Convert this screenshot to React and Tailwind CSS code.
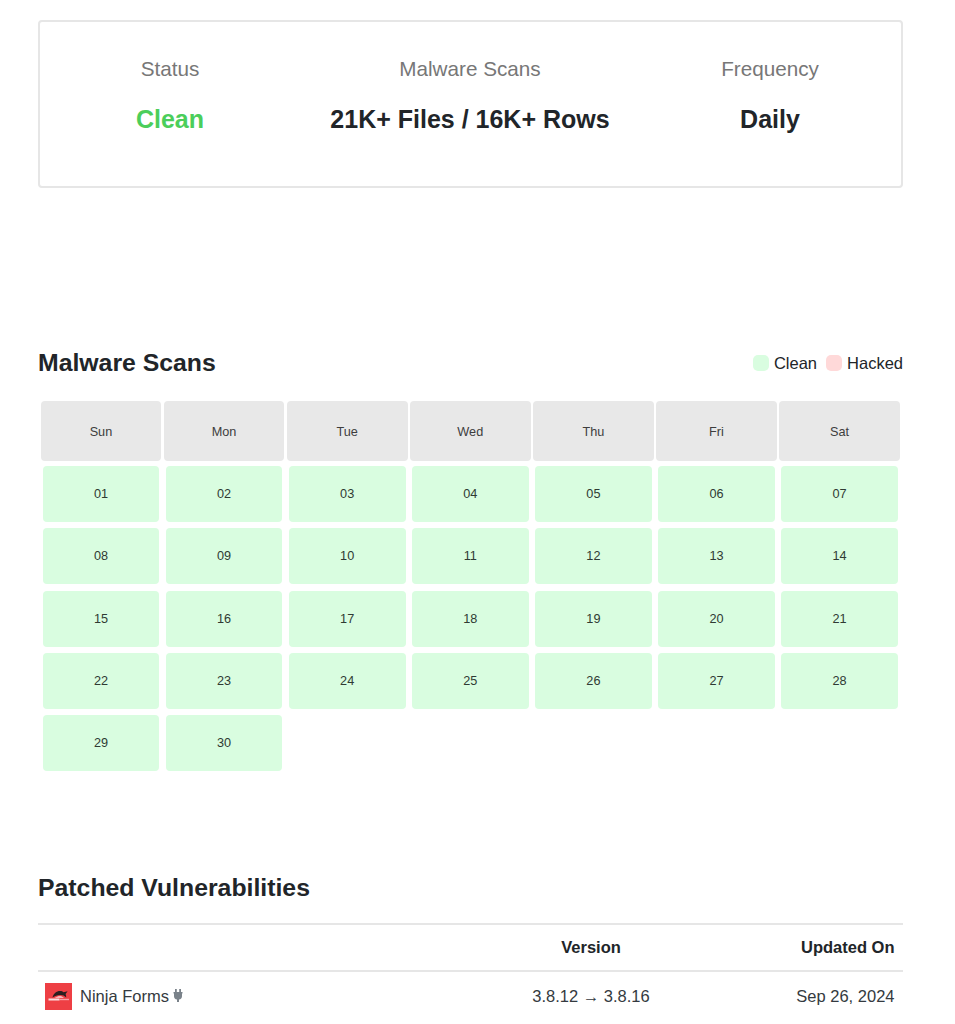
const header = ["Sun", "Mon", "Tue", "Wed", "Thu", "Fri", "Sat"];
const days = Array.from({ length: 30 }, (_, i) => String(i + 1).padStart(2, "0"));

function NinjaLogo() {
  return (
    <svg viewBox="0 0 27 27" className="mt-[2px] h-[27px] w-[27px] shrink-0" aria-hidden="true">
      <rect width="27" height="27" fill="#ee3f44" />
      <path d="M7.500 14.500C8.500 10.500 11.500 8 15 8c1.500 0 2.700.5 3.600 1.300l4-1.100-2 2.800c.4 1 .6 2 .6 3.500-1.500-1.700-3.400-2.500-6-2.500-3 0-5.300 1.100-7.700 2.500z" fill="#2b1f20" />
      <path d="M9.500 14.800c1.800-1 3.500-1.600 5.400-1.600 1.600 0 3 .5 4.100 1.600z" fill="#f9dfe0" />
      <rect x="3.500" y="15.500" width="11" height="2" fill="#f9dfe0" />
      <rect x="14.500" y="15.800" width="9.500" height="1.400" fill="#f6a5a8" />
    </svg>
  );
}

function Plug() {
  return (
    <svg viewBox="0 0 10 13" className="ml-[4px] h-[13px] w-[10px]" aria-hidden="true">
      <path d="M2 0h1.800v3h2.400V0H8v3h1.500v1.500H9v2.800C9 9 7.800 10.300 6 10.600V13H4v-2.400C2.200 10.300 1 9 1 7.300V4.500H.5V3H2z" fill="#7a828a" />
    </svg>
  );
}

export default function App() {
  return (
    <div className="ml-[38px] h-[1024px] w-[865px] overflow-hidden font-['Liberation_Sans',Arial,sans-serif] text-[#212529]">
      <section className="mt-[20px] grid h-[168px] grid-cols-[1fr_340px_1fr] rounded-[4px] border-2 border-[#e6e6e6] pr-[1px] pt-[35px] text-center">
        <div>
          <div className="text-[20.700px] leading-[24px] text-[#777777]">Status</div>
          <div className="mt-[23px] text-[25px] font-bold leading-[30px] text-[#4bce5b]">Clean</div>
        </div>
        <div>
          <div className="text-[20.700px] leading-[24px] text-[#777777]">Malware Scans</div>
          <div className="mt-[23px] text-[25px] font-bold leading-[30px]">21K+ Files / 16K+ Rows</div>
        </div>
        <div>
          <div className="text-[20.700px] leading-[24px] text-[#777777]">Frequency</div>
          <div className="mt-[23px] text-[25px] font-bold leading-[30px]">Daily</div>
        </div>
      </section>

      <div className="mt-[160px] flex h-[30px] items-center justify-between">
        <h2 className="text-[24.800px] font-bold leading-[30px]">Malware Scans</h2>
        <div className="flex items-center text-[16.500px] leading-[20px]">
          <span className="h-[16px] w-[16px] rounded-[5px] bg-[#d9fde0]" />
          <span className="ml-[5px]">Clean</span>
          <span className="ml-[9px] h-[16px] w-[16px] rounded-[5px] bg-[#ffd9d9]" />
          <span className="ml-[5px]">Hacked</span>
        </div>
      </div>

      <div className="ml-[2.600px] mr-[3px] mt-[23px] grid grid-cols-7 gap-x-[2.400px] gap-y-[2.200px] text-[12.700px] leading-[16px]">
        {header.map((d) => (
          <div key={d} className="flex h-[60px] items-center justify-center rounded-[4px] bg-[#e8e8e8] pt-[1px] text-[#3d3d3d]">
            {d}
          </div>
        ))}
        {days.map((d) => (
          <div key={d} className="flex h-[60px] px-[2px] pb-[1px] pt-[3px]">
            <div className="flex flex-1 items-center justify-center rounded-[4px] bg-[#d9fde0] text-[#2f3a33]">{d}</div>
          </div>
        ))}
      </div>

      <h2 className="mt-[101px] text-[24.800px] font-bold leading-[30px]">Patched Vulnerabilities</h2>

      <div className="mt-[20px] grid h-[49px] grid-cols-[432px_242px_191px] items-center border-y-2 border-[#e6e6e6] pb-[1px] text-[16.500px] font-bold leading-[20px]">
        <div />
        <div className="text-center">Version</div>
        <div className="pr-[8.500px] text-right">Updated On</div>
      </div>
      <div className="grid h-[48px] grid-cols-[432px_242px_191px] items-center text-[16.500px] leading-[20px] text-[#343a40]">
        <div className="flex items-center pl-[7px]">
          <NinjaLogo />
          <span className="ml-[8px]">Ninja Forms</span>
          <Plug />
        </div>
        <div className="text-center">3.8.12 → 3.8.16</div>
        <div className="pr-[8.500px] text-right">Sep 26, 2024</div>
      </div>
    </div>
  );
}
